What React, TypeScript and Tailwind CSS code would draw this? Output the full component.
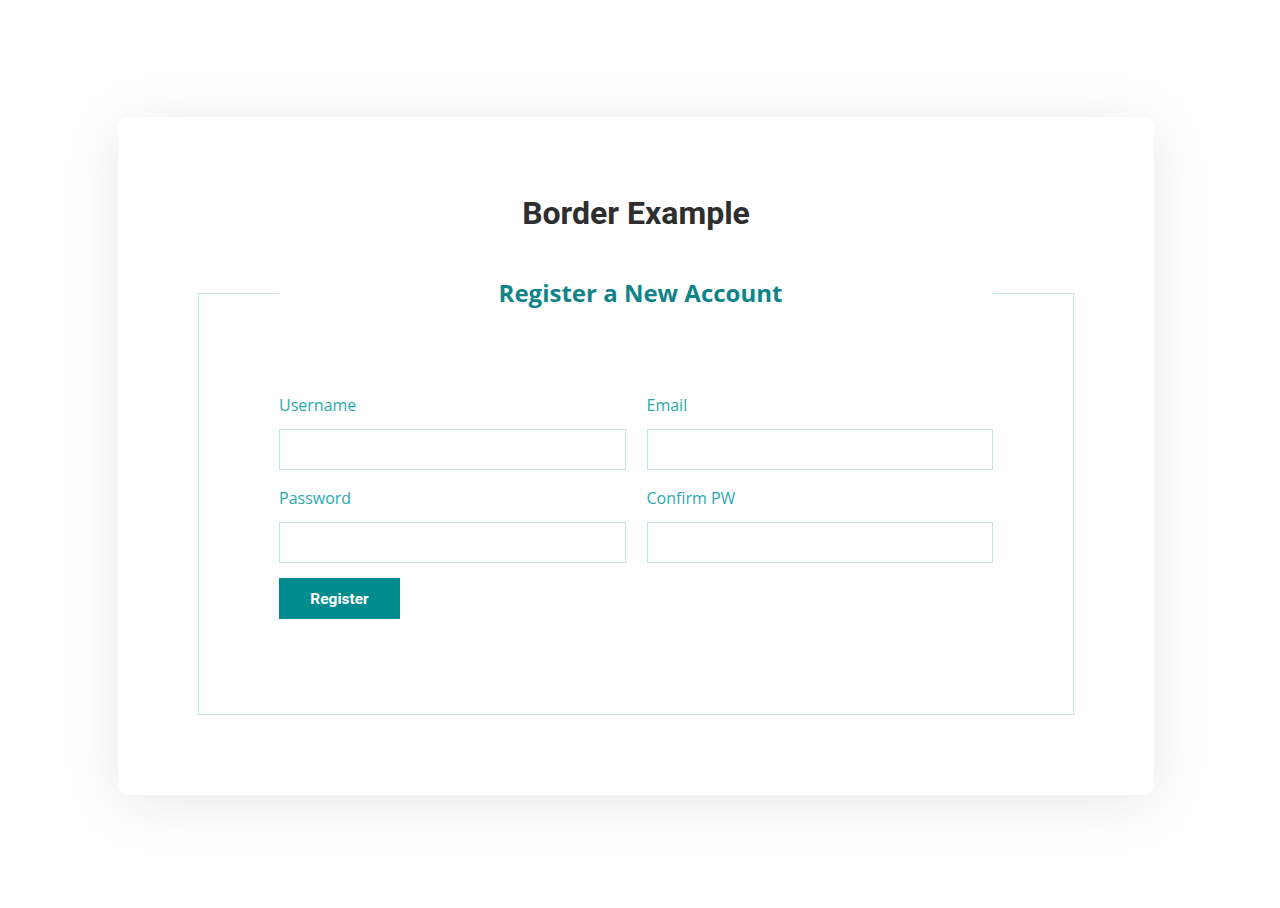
import React from "react";

const labelCls =
  "block text-[16px] leading-[24px] text-[#2aa9ae] mb-[12px] font-['Open_Sans',sans-serif]";
const inputCls =
  "block w-full h-[41px] border border-[#c8e3e6] bg-white outline-none px-3 text-[15px] font-['Open_Sans',sans-serif]";

export default function App() {
  return (
    <div className="w-[1280px] h-[908px] bg-white flex items-start">
      <div className="ml-[118px] mt-[117px] w-[1036px] h-[678px] bg-white rounded-[10px] shadow-[0_8px_60px_rgba(0,0,0,0.09)] pt-[78px] px-[80px]">
        <h1 className="text-center text-[32px] leading-[36px] font-bold text-[#2e2e2e] font-['Roboto',sans-serif]">
          Border Example
        </h1>
        <fieldset className="mt-[46px] border border-[#c8e3e6] px-[80px] h-[438px]">
          <legend className="w-[714px] text-center pl-[9px] text-[24px] leading-[32px] font-bold text-[#0e8489] font-['Open_Sans',sans-serif]">
            Register a New Account
          </legend>
          <form className="mt-[84px]" onSubmit={(e) => e.preventDefault()}>
            <div className="grid grid-cols-2 gap-x-[21px] gap-y-[16px]">
              <div>
                <label className={labelCls}>Username</label>
                <input className={inputCls} type="text" />
              </div>
              <div>
                <label className={labelCls}>Email</label>
                <input className={inputCls} type="email" />
              </div>
              <div>
                <label className={labelCls}>Password</label>
                <input className={inputCls} type="password" />
              </div>
              <div>
                <label className={labelCls}>Confirm PW</label>
                <input className={inputCls} type="password" />
              </div>
            </div>
            <button
              type="submit"
              className="mt-[15px] w-[121px] h-[41px] pt-[3px] bg-[#008b8f] text-white text-[15.5px] font-bold font-['Roboto',sans-serif]"
            >
              Register
            </button>
          </form>
        </fieldset>
      </div>
    </div>
  );
}
